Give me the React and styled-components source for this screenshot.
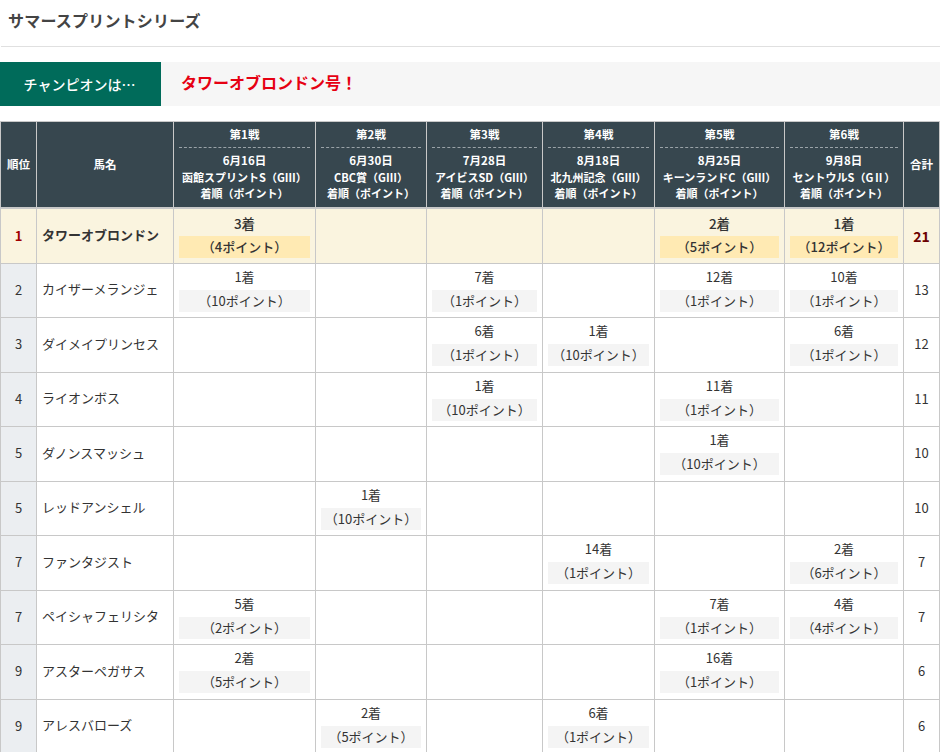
import styled, { createGlobalStyle } from "styled-components";

const GlobalStyle = createGlobalStyle`
  html { overflow: hidden; }
  body {
    margin: 0;
    background: #fff;
    color: #333;
    font-family: "Noto Sans CJK JP", "Noto Sans", sans-serif;
  }
`;

const Page = styled.div`
  width: 940px;
`;

const Title = styled.h1`
  margin: 0 0 15px 1px;
  height: 46px;
  padding-left: 7px;
  box-sizing: content-box;
  border-bottom: 1px solid #e0e0e0;
  font-size: 16px;
  letter-spacing: 0.2px;
  line-height: 40px;
  font-weight: 700;
  color: #444;
`;

const Banner = styled.div`
  display: flex;
  height: 44px;
  margin-bottom: 15px;
  background: #f6f6f6;
`;

const BannerLabel = styled.div`
  width: 161px;
  padding-right: 2px;
  box-sizing: border-box;
  background: #006b5a;
  color: #fff;
  font-size: 14px;
  font-weight: 500;
  line-height: 44px;
  text-align: center;
`;

const BannerValue = styled.div`
  padding-left: 20px;
  color: #e60012;
  font-size: 16px;
  font-weight: 700;
  line-height: 41px;
`;

const Table = styled.table`
  width: 940px;
  table-layout: fixed;
  border-collapse: collapse;
  font-size: 13px;
`;

const Th = styled.th`
  padding: 0 5px;
  background: #37474f;
  border: 1px solid #c8c8c8;
  border-bottom-width: 2px;
  color: #fff;
  font-size: 11.5px;
  font-weight: 700;
  vertical-align: middle;
  text-align: center;
  line-height: 16px;
`;

const RaceNo = styled.div`
  padding: 4px 0 5px;
  margin-bottom: 4px;
  border-bottom: 1px dashed #9aa3a8;
  line-height: 16px;
`;

const RaceInfo = styled.div`
  font-size: 11px;
  line-height: 16.5px;
  white-space: nowrap;
  padding-bottom: 5px;
`;

const RaceDate = styled.span`
  display: block;
  font-size: 11.5px;
`;

const Row = styled.tr`
  height: ${(p) => (p.$top ? "55px" : "54.5px")};
  background: ${(p) => (p.$top ? "#faf4df" : "#fff")};
`;

const Td = styled.td`
  padding: 3px 5px 5px;
  border: 1px solid #c8c8c8;
  text-align: center;
  vertical-align: middle;
`;

const RankCell = styled(Td)`
  padding: ${(p) => (p.$top ? "0" : "0 0 2px")};
  background: ${(p) => (p.$top ? "transparent" : "#ebeef1")};
  color: ${(p) => (p.$top ? "#a00000" : "#333")};
  font-weight: ${(p) => (p.$top ? 700 : 400)};
`;

const NameCell = styled(Td)`
  padding: ${(p) => (p.$top ? "0 5px 2px" : "0 5px 3px")};
  text-align: left;
  white-space: nowrap;
  font-weight: ${(p) => (p.$top ? 700 : 400)};
`;

const TotalCell = styled(Td)`
  padding: ${(p) => (p.$top ? "0" : "0 0 2px")};
  color: ${(p) => (p.$top ? "#6b0000" : "#333")};
  font-size: ${(p) => (p.$top ? "14px" : "13px")};
  font-weight: ${(p) => (p.$top ? 700 : 400)};
`;

const Place = styled.div`
  height: ${(p) => (p.$top ? "24px" : "23px")};
  line-height: ${(p) => (p.$top ? "23px" : "20px")};
  font-size: ${(p) => (p.$top ? "13.5px" : "13px")};
  font-weight: ${(p) => (p.$top ? 500 : 400)};
`;

const Points = styled.div`
  height: 22px;
  line-height: 22px;
  white-space: nowrap;
  background: ${(p) => (p.$top ? "#ffeab3" : "#f4f4f4")};
  font-weight: ${(p) => (p.$top ? 500 : 400)};
`;

const races = [
  { no: "第1戦", date: "6月16日", name: "函館スプリントS（GⅢ）", width: 142 },
  { no: "第2戦", date: "6月30日", name: "CBC賞（GⅢ）", width: 111 },
  { no: "第3戦", date: "7月28日", name: "アイビスSD（GⅢ）", width: 116 },
  { no: "第4戦", date: "8月18日", name: "北九州記念（GⅢ）", width: 112 },
  { no: "第5戦", date: "8月25日", name: "キーンランドC（GⅢ）", width: 130 },
  { no: "第6戦", date: "9月8日", name: "セントウルS（GⅡ）", width: 119 },
];

const rows = [
  { rank: 1, name: "タワーオブロンドン", total: 21, res: [[3, 4], null, null, null, [2, 5], [1, 12]] },
  { rank: 2, name: "カイザーメランジェ", total: 13, res: [[1, 10], null, [7, 1], null, [12, 1], [10, 1]] },
  { rank: 3, name: "ダイメイプリンセス", total: 12, res: [null, null, [6, 1], [1, 10], null, [6, 1]] },
  { rank: 4, name: "ライオンボス", total: 11, res: [null, null, [1, 10], null, [11, 1], null] },
  { rank: 5, name: "ダノンスマッシュ", total: 10, res: [null, null, null, null, [1, 10], null] },
  { rank: 5, name: "レッドアンシェル", total: 10, res: [null, [1, 10], null, null, null, null] },
  { rank: 7, name: "ファンタジスト", total: 7, res: [null, null, null, [14, 1], null, [2, 6]] },
  { rank: 7, name: "ペイシャフェリシタ", total: 7, res: [[5, 2], null, null, null, [7, 1], [4, 4]] },
  { rank: 9, name: "アスターペガサス", total: 6, res: [[2, 5], null, null, null, [16, 1], null] },
  { rank: 9, name: "アレスバローズ", total: 6, res: [null, [2, 5], null, [6, 1], null, null] },
];

export default function App() {
  return (
    <Page>
      <GlobalStyle />
      <Title>サマースプリントシリーズ</Title>
      <Banner>
        <BannerLabel>チャンピオンは…</BannerLabel>
        <BannerValue>タワーオブロンドン号！</BannerValue>
      </Banner>
      <Table>
        <colgroup>
          <col style={{ width: 36 }} />
          <col style={{ width: 137 }} />
          {races.map((r) => (
            <col key={r.no} style={{ width: r.width }} />
          ))}
          <col style={{ width: 36 }} />
        </colgroup>
        <thead>
          <tr>
            <Th>順位</Th>
            <Th>馬名</Th>
            {races.map((r) => (
              <Th key={r.no}>
                <RaceNo>{r.no}</RaceNo>
                <RaceInfo>
                  <RaceDate>{r.date}</RaceDate>
                  {r.name}
                  <br />
                  着順（ポイント）
                </RaceInfo>
              </Th>
            ))}
            <Th>合計</Th>
          </tr>
        </thead>
        <tbody>
          {rows.map((row) => {
            const top = row.rank === 1;
            return (
              <Row key={row.name} $top={top}>
                <RankCell $top={top}>{row.rank}</RankCell>
                <NameCell $top={top}>{row.name}</NameCell>
                {row.res.map((res, i) => (
                  <Td key={i}>
                    {res && (
                      <>
                        <Place $top={top}>{res[0]}着</Place>
                        <Points $top={top}>（{res[1]}ポイント）</Points>
                      </>
                    )}
                  </Td>
                ))}
                <TotalCell $top={top}>{row.total}</TotalCell>
              </Row>
            );
          })}
        </tbody>
      </Table>
    </Page>
  );
}
